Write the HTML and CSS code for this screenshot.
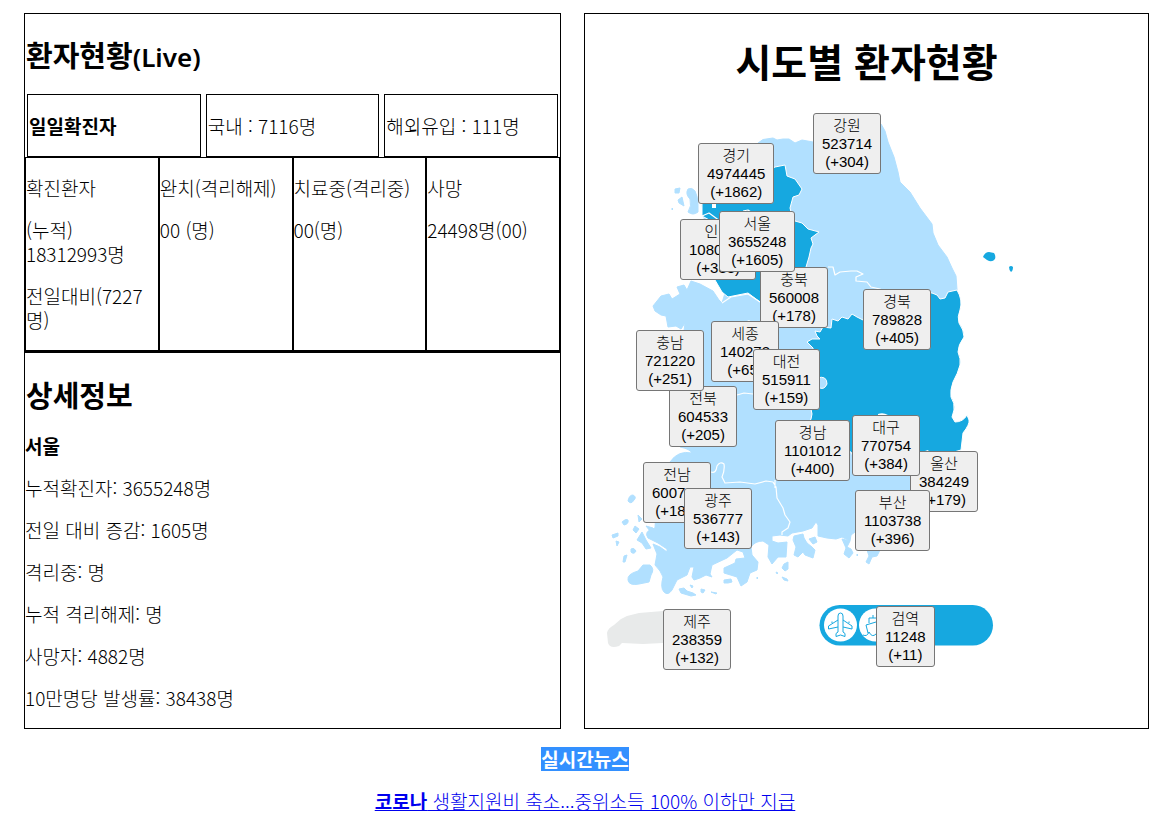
FILE: index.html
```html
<!DOCTYPE html>
<html lang="ko">
<head>
<meta charset="utf-8">
<title>환자현황</title>
<link rel="stylesheet" href="styles.css">
</head>
<body>
<main class="board">
  <section class="panel">
    <h2>환자현황<span class="latin">(Live)</span></h2>
    <div class="daily">
      <div class="daily-cell"><strong>일일확진자</strong></div>
      <div class="daily-cell">국내 : 7116명</div>
      <div class="daily-cell">해외유입 : 111명</div>
    </div>
    <div class="totals">
      <div class="total-cell"><p>확진환자</p><p>(누적) 18312993명</p><p>전일대비(7227명)</p></div>
      <div class="total-cell"><p>완치(격리해제)</p><p>00 (명)</p></div>
      <div class="total-cell"><p>치료중(격리중)</p><p>00(명)</p></div>
      <div class="total-cell"><p>사망</p><p>24498명(00)</p></div>
    </div>
    <div class="detail">
      <h2>상세정보</h2>
      <p><strong>서울</strong></p>
      <p>누적확진자: 3655248명</p>
      <p>전일 대비 증감: 1605명</p>
      <p>격리중: 명</p>
      <p>누적 격리해제: 명</p>
      <p>사망자: 4882명</p>
      <p>10만명당 발생률: 38438명</p>
    </div>
  </section>

  <section class="panel">
    <h1>시도별 환자현황</h1>
    <div class="map">
      <svg class="map-art" viewBox="600 100 430 580" aria-hidden="true">
        <g class="land">
          <path d="M758 143L763 139.500L773 138L777 140L783 139L789 139L795 143L802 140L813 142L850 136L881 124L885 131L888 142L894 157L898 172L900 182L910 192L920 208L932 224L933 233L938 245L947 257L952 268L956 276L957 290L930 320L930 430L950 455L950 485L920 515L895 530L855 532L851 535L850 541L842 537L836 539L827 538L818 536L818 525L816 522L812 528L803 531L792 533L788 536L780 535L772 536L772 541L778 543L787 542L786 557L778 557L772 564L768 557L769 545L763 541Q755 541 751 547L752 555L758 562L757 570L750 573L747 582L741 586L737 577L724 573L724 568L735 563L736 559L745 558L743 552L737 550L727 558L712 565L710 574L712 577L706 575L700 578L694 580L692 577L694 567L690 567L687 575L677 580L672 590Q668 596 664 592Q660 588 663 577Q661 571 655 565L657 554L653 544L660 547L667 552L667 549L658 543L648 538Q643 531 655 528L656 510L665 480L670 462Q678 450 692 453Q690 449 680 447L680 395L684 331L685 323L681 329L676 326L668 327L666 316L661 315L655 311L653 306L661 296L669 294L672 299L680 294L677 287L684 285L687 290L691 281L700 284L713 291L719 300L722 303L735 260L705 224L702 205L730 170Z"/>
          <path d="M794 536L803 534L804 538L807 543L812 547L815 550L813 558L805 555L803 552L798 557L794 555L796 547L793 540ZM809 539L815 537L817 542L813 544ZM842 539L850 541L847 547L851 549L853 553L849 558L844 554L846 548Z"/>
          <path d="M688 189Q692 187 695 191Q698 197 698 204L698 212Q693 216 688 212Q692 206 690 199Q685 194 688 189Z"/>
          <path d="M675 189L680 188L679 193L675 193ZM678 200L682 197L684 206L679 203ZM672 208L673 209L672 210Z"/>
          <path d="M628 501Q629 495 633 495Q637 497 634 500Q631 505 628 501ZM622 522Q626 518 628 520Q629 524 624 525ZM612 535L618 533L618 536L613 538ZM616 541L619 542L617 546ZM633 530L635 526L639 529L636 533ZM646 526L653 528L650 531ZM638 515L642 519L639 522ZM631 549Q634 547 636 551Q634 555 631 552ZM624 556L627 555L625 562L623 562ZM637 540L642 532L646 540L651 548L646 549L642 543Z"/>
          <path d="M628 580Q627 574 638 571L643 565L650 565Q655 569 651 575L649 582L639 584Q629 586 628 580Z"/>
          <path d="M679 589L684 588L687 591L693 593L696 595L691 596L681 593ZM690 585L693 586L692 588ZM701 589L705 590L703 593L701 592ZM711 592L717 593L716 594ZM724 580L731 579L732 582L728 583L724 583ZM776 572L778 573L777 574ZM782 577L787 579L788 581L784 580ZM757 577L758 578L757 579Z"/>
          <path d="M784 564L788 562L788 569L785 571L782 568ZM867 550L880 550L877 556L872 557L869 564L866 562L869 556ZM857 554L858 555L857 556Z"/>
        </g>
        <g class="hot">
          <path d="M702 200L702 216L713 222L730 250L715 280L722 292L728 297L748 293L760 302L803 302L806 267L809 257L811 248L813 244L811 238L819 232L808 229L802 223L795 221L792 216L790 208L793 197L799 195L802 189L795 179L787 176L785 165L775 167L740 185Z"/>
          <path d="M957 290L948 292L945 298L940 299L937 295L932 293L900 290L863 320L857 317L852 314L848 319L842 317L838 321L832 319L831 328L823 327L820 332L815 331L817 336L820 339L812 339L807 342L813 348L817 378Q827 375 827 384Q824 391 818 387L811 409Q813 414 811 419L800 440L851 452L853 456L890 470L961 450L963 433Q970 424 969 420L967 415Q963 422 955 422L952 417L954 410Q955 403 951 397Q950 390 953 382Q958 373 960 365Q961 359 958 352Q958 345 964 337Q964 330 959 323Q957 317 960 310Q963 300 957 290Z"/>
        </g>
        <g class="border">
          <path d="M828 267L833 267L835 275L840 272L851 271L857 271L863 274L856 277L856 281L867 282L871 287L880 289L890 294"/>
          <path d="M702 216L709 213L720 221M743 211L748 210L751 212"/>
          <path d="M722 303L731 297L748 294L760 302M737 395L744 393L753 394L761 392M676 386L680 383L686 384"/>
          <path d="M711 472Q716 474 717 466Q720 461 724 464Q725 470 722 477L725 483L740 482L755 484L766 481L773 482L776 487L777 498L783 508L785 515L790 522L788 528L782 532V535M775 480L775 488"/>
        </g>
        <path class="sea" d="M712 203L716 202L716 208L712 208ZM878 414Q883 412 888 415L878 416ZM925 451L928 450L930 453ZM745 322L749 320L753 323L745 324Z"/>
        <path class="hot-fill" d="M983 257Q985 252 989 252L994 253Q996 256 995 259Q992 263 987 260ZM1009 267Q1011 265 1013 267Q1013 271 1011 272Q1009 270 1009 267Z"/>
        <path class="jeju" d="M607 633Q608 628 614 625L621 619L627 616L639 613L663 611L700 612L700 639L663 643L643 644L622 643L619 646Q610 649 608 643Z"/>
        <rect class="hot-fill" x="819.500" y="605" width="173.500" height="40.500" rx="20.200"/>
        <circle class="disc" cx="840.500" cy="625" r="16.500"/>
        <circle class="disc" cx="875.500" cy="625" r="16.500"/>
        <path class="glyph" d="M838 620V616Q838 613 840.500 613Q843 613 843 616V620L852 626V629L843 627V632L845 633.500V636.500L840.500 635L836 636.500V633.500L838 632V627L828.500 629V626ZM838 620V627M843 620V627M832 623V621.500M849 623V621.500"/>
        <path class="glyph" d="M863 635Q867 637 869 632Q872 638 876 634M868 633L866 625L876 622L886 625L883 634M869 623V618H882V623M873 618V615"/>
      </svg>
      <button class="pin gangwon">강원<br>523714<br>(+304)</button>
      <button class="pin gyeonggi">경기<br>4974445<br>(+1862)</button>
      <button class="pin incheon">인천<br>1080000<br>(+383)</button>
      <button class="pin chungbuk">충북<br>560008<br>(+178)</button>
      <button class="pin seoul">서울<br>3655248<br>(+1605)</button>
      <button class="pin gyeongbuk">경북<br>789828<br>(+405)</button>
      <button class="pin sejong">세종<br>140273<br>(+65)</button>
      <button class="pin daejeon">대전<br>515911<br>(+159)</button>
      <button class="pin jeonbuk">전북<br>604533<br>(+205)</button>
      <button class="pin chungnam">충남<br>721220<br>(+251)</button>
      <button class="pin gyeongnam">경남<br>1101012<br>(+400)</button>
      <button class="pin ulsan">울산<br>384249<br>(+179)</button>
      <button class="pin daegu">대구<br>770754<br>(+384)</button>
      <button class="pin busan">부산<br>1103738<br>(+396)</button>
      <button class="pin jeonnam">전남<br>600700<br>(+180)</button>
      <button class="pin gwangju">광주<br>536777<br>(+143)</button>
      <button class="pin jeju-pin">제주<br>238359<br>(+132)</button>
      <button class="pin quarantine">검역<br>11248<br>(+11)</button>
    </div>
  </section>
</main>
<footer class="news">
  <p><strong class="news-title">실시간뉴스</strong></p>
  <p><a href="#"><b>코로나</b> 생활지원비 축소...중위소득 100% 이하만 지급</a></p>
</footer>
</body>
</html>
```

FILE: styles.css
```css
* {
  box-sizing: border-box;
}

body {
  margin: 0;
  background: #fff;
  color: #000;
  font: 300 19px/24px "Noto Sans CJK KR", sans-serif;
}

p {
  margin: 18px 0;
}

b,
strong {
  font-weight: 700;
}

h1 {
  margin: 22px 0 16px;
  font-size: 39px;
  line-height: 48px;
  text-align: center;
}

h2 {
  margin: 22px 0;
  padding-left: 1px;
  font-size: 29px;
  line-height: 36px;
}

.latin {
  font-family: "Noto Sans", sans-serif;
  font-size: 26px;
  font-weight: 600;
  line-height: 24px;
}

.board {
  display: grid;
  grid-template-columns: 537fr 565fr;
  gap: 23px;
  padding: 13px 15px 0 24px;
}

.panel {
  display: flow-root;
  border: 1px solid #000;
}

.daily {
  display: grid;
  grid-template-columns: repeat(3, 1fr);
  gap: 5px;
  padding: 0 2px;
}

.daily-cell {
  padding: 19px 1px 18px;
  border: 1px solid #000;
}

.totals {
  display: grid;
  grid-template-columns: repeat(4, 1fr);
  border-bottom: 2px solid #000;
}

.total-cell {
  border: 1px solid #000;
}

.detail {
  display: flow-root;
  padding-top: 1px;
}

.map {
  position: relative;
  width: 430px;
  margin-left: 15px;
}

.map-art {
  display: block;
  width: 100%;
}

.land {
  fill: #b1e0ff;
  stroke: #b1e0ff;
  stroke-width: 1;
  stroke-linejoin: round;
}

.hot {
  fill: #16a8e0;
  stroke: #fff;
  stroke-width: 1;
  stroke-linejoin: round;
}

.hot-fill {
  fill: #16a8e0;
}

.border {
  fill: none;
  stroke: #fff;
  stroke-width: 1.2;
  stroke-linejoin: round;
}

.sea,
.disc {
  fill: #fff;
}

.jeju {
  fill: #e8eaea;
}

.glyph {
  fill: none;
  stroke: #16a8e0;
  stroke-width: 1;
  stroke-linejoin: round;
}

.pin {
  position: absolute;
  padding: 3px 8px 2px;
  border: 1px solid #767676;
  border-radius: 3px;
  background: #efefef;
  color: #000;
  font: 300 15px/18px "Liberation Sans", "Noto Sans CJK KR", sans-serif;
  white-space: nowrap;
}

.gangwon { left: 213px; top: 13px; }
.gyeonggi { left: 98px; top: 43px; }
.incheon { left: 80px; top: 119px; }
.chungbuk { left: 160px; top: 167px; }
.seoul { left: 119px; top: 111px; }
.gyeongbuk { left: 263px; top: 189px; }
.sejong { left: 111px; top: 221px; }
.daejeon { left: 153px; top: 249px; }
.jeonbuk { left: 69px; top: 286px; }
.chungnam { left: 36px; top: 230px; }
.gyeongnam { left: 175px; top: 320px; }
.ulsan { left: 310px; top: 351px; }
.daegu { left: 252px; top: 315px; }
.busan { left: 255px; top: 390px; }
.jeonnam { left: 43px; top: 362px; }
.gwangju { left: 84px; top: 388px; }
.jeju-pin { left: 63px; top: 509px; }
.quarantine { left: 276px; top: 506px; }

.news {
  padding: 0 15px 0 21px;
  text-align: center;
}

.news-title {
  display: inline-block;
  background: #3390ff;
  color: #fff;
}

a {
  color: #00e;
}
```
